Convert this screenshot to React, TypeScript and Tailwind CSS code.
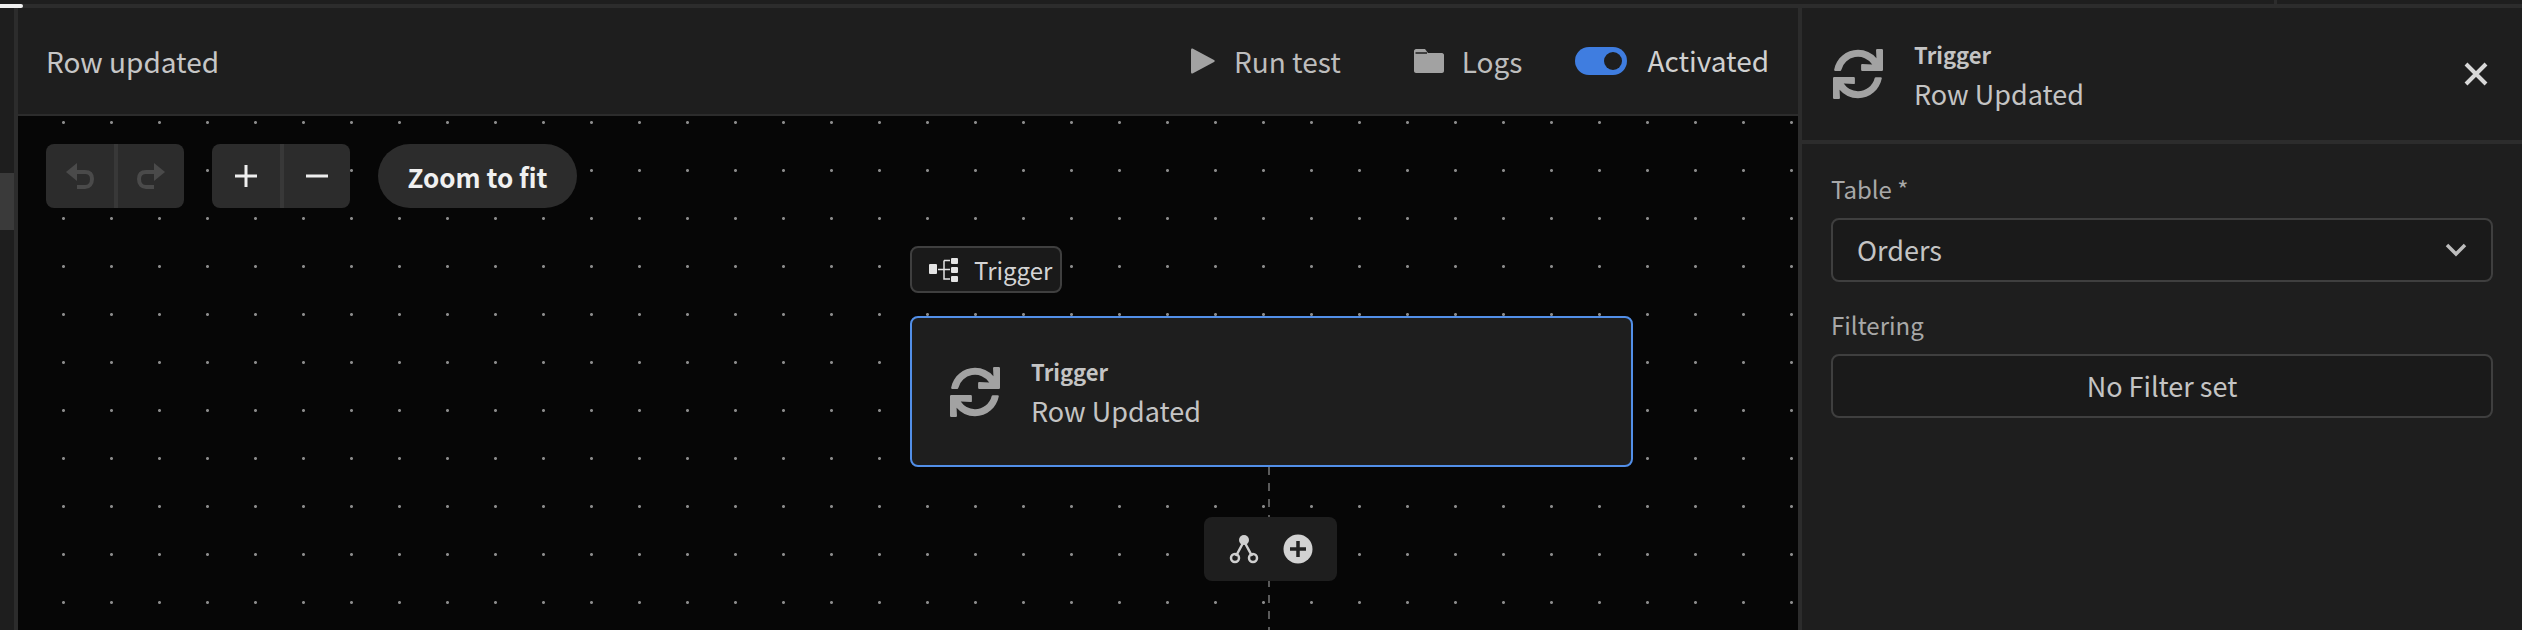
import { FaSync } from "react-icons/fa";

const font = "font-['Noto_Sans_CJK_SC','Noto_Sans',sans-serif]";

function Undo({ flip }: { flip?: boolean }) {
  return (
    <svg width="28" height="26" viewBox="0 0 28 26" className={flip ? "-scale-x-100" : ""}>
      <path d="M0 9 L11 0 V18 Z" fill="#4a4a4a" />
      <path d="M9 9 H19 C24 9 26 12 26 16 C26 21 23 24 19 24 H11" fill="none" stroke="#4a4a4a" strokeWidth="4" />
    </svg>
  );
}

function TriggerIcon() {
  return (
    <svg width="30" height="24" viewBox="0 0 30 24" fill="#e4e4e4">
      <rect x="0" y="6" width="8" height="10" rx="1" />
      <rect x="22" y="0" width="7" height="6" rx="1" />
      <rect x="22" y="9" width="7" height="6" rx="1" />
      <rect x="22" y="18" width="7" height="6" rx="1" />
      <path d="M9 11.5 H21 M15 2.5 H21 M15 2.5 V21 H21" fill="none" stroke="#e4e4e4" strokeWidth="1.5" />
    </svg>
  );
}

function BranchIcon() {
  return (
    <svg width="30" height="30" viewBox="0 0 30 30" fill="none" stroke="#cfcfcf">
      <circle cx="15" cy="6" r="5" fill="#cfcfcf" stroke="none" />
      <path d="M14 9 L7 22 M16 9 L23 22" strokeWidth="2.5" />
      <circle cx="6" cy="24" r="4" strokeWidth="2.5" />
      <circle cx="24" cy="24" r="4" strokeWidth="2.5" />
    </svg>
  );
}

function PlusCircle() {
  return (
    <svg width="30" height="30" viewBox="0 0 30 30">
      <circle cx="15" cy="15" r="14.5" fill="#d2d2d2" />
      <path d="M15 7 V23 M7 15 H23" stroke="#222222" strokeWidth="3.5" />
    </svg>
  );
}

function NodeTitle() {
  return (
    <div className="flex flex-col">
      <span className="text-[22px] leading-[30px] font-bold text-[#c4c4c4]">Trigger</span>
      <span className="mt-[9px] text-[27px] leading-[32px] text-[#c4c4c4]">Row Updated</span>
    </div>
  );
}

export default function App() {
  return (
    <div className={`relative flex h-[630px] w-[2522px] flex-col overflow-hidden bg-[#1e1e1e] ${font}`}>
      <div className="relative h-1 shrink-0">
        <div className="absolute left-[2274px] top-0 h-1 w-[3px] bg-[#2c2c2c]" />
      </div>
      <div className="h-1 shrink-0 bg-[#2c2c2c]">
        <div className="h-1 w-[23px] rounded-r-full bg-[#f0f0f0]" />
      </div>
      <div className="flex min-h-0 flex-1">
        <div className="w-[14px] shrink-0 pt-[165px]">
          <div className="h-[57px] bg-[#3a3a3a]" />
        </div>
        <div className="w-1 shrink-0 bg-[#2c2c2c]" />

        <main className="flex w-[1780px] shrink-0 flex-col">
          <header className="flex h-[106px] shrink-0 items-center border-[#1e1e1e] pl-[28px] pr-[29px]">
            <span className="text-[28px] text-[#c6c6c6]">Row updated</span>
            <div className="ml-auto flex items-center">
              <svg width="25" height="26" viewBox="0 0 25 26">
                <path d="M1 2 C1 0.5 2 0 3 0.8 L24 12 C25 12.6 25 13.4 24 14 L3 25.2 C2 26 1 25.5 1 24 Z" fill="#a2a2a2" />
              </svg>
              <span className="ml-[19px] text-[28px] text-[#bdbdbd]">Run test</span>
              <svg className="ml-[73px]" width="30" height="24" viewBox="0 0 30 24">
                <path d="M0 2 C0 1 1 0 2 0 H11 L14 4 H28 C29 4 30 5 30 6 V22 C30 23 29 24 28 24 H2 C1 24 0 23 0 22 Z" fill="#a2a2a2" />
                <path d="M1.5 4 H13" stroke="#1e1e1e" strokeWidth="1.5" />
              </svg>
              <span className="ml-[18px] text-[28px] text-[#bdbdbd]">Logs</span>
              <div className="ml-[53px] flex h-[28px] w-[52px] items-center justify-end rounded-full bg-[#3f7de0] pr-[5px]">
                <div className="h-[18px] w-[18px] rounded-full bg-[#1e1e1e]" />
              </div>
              <span className="ml-[20px] -translate-y-[1px] text-[28px] text-[#d0d0d0]">Activated</span>
            </div>
          </header>
          <div className="h-[2px] shrink-0 bg-[#2c2c2c]" />

          <div className="relative min-h-0 flex-1 bg-[#060606] bg-[radial-gradient(circle_at_1.5px_1.5px,#8a8a8a_1.2px,transparent_1.7px)] bg-size-[48px_48px] bg-position-[44px_5px]">
            <div className="absolute left-[28px] top-[28px] flex items-center gap-[28px]">
              <div className="flex h-[64px] w-[138px] rounded-lg bg-[#2c2c2c]">
                <div className="flex w-[68px] items-center justify-center"><Undo /></div>
                <div className="w-[4px] bg-[#383838]" />
                <div className="flex flex-1 items-center justify-center"><Undo flip /></div>
              </div>
              <div className="flex h-[64px] w-[138px] rounded-lg bg-[#2c2c2c]">
                <div className="flex w-[68px] items-center justify-center">
                  <svg width="24" height="24" viewBox="0 0 24 24"><path d="M12 1 V23 M1 12 H23" stroke="#eeeeee" strokeWidth="3" /></svg>
                </div>
                <div className="w-[4px] bg-[#383838]" />
                <div className="flex flex-1 items-center justify-center">
                  <svg width="24" height="24" viewBox="0 0 24 24"><path d="M1 12 H23" stroke="#eeeeee" strokeWidth="3" /></svg>
                </div>
              </div>
              <button className="h-[64px] w-[199px] rounded-full bg-[#2c2c2c] text-[26px] font-semibold text-[#f0f0f0]">Zoom to fit</button>
            </div>

            <div className="absolute left-[892px] top-[130px] flex h-[47px] w-[152px] items-center gap-[15px] rounded-lg border-2 border-[#3f3f3f] bg-[#1a1a1a] pl-[17px]">
              <TriggerIcon />
              <span className="text-[24px] text-[#d4d4d4]">Trigger</span>
            </div>

            <div className="absolute left-[892px] top-[200px] flex h-[151px] w-[723px] items-center gap-[31px] rounded-lg border-2 border-[#528fe8] bg-[#1e1e1e] pl-[38px]">
              <FaSync size={50} color="#a2a2a2" />
              <NodeTitle />
            </div>

            <div className="absolute left-[1250px] top-[351px] h-[163px] w-[2px] bg-[repeating-linear-gradient(to_bottom,#5a5a5a_0px,#5a5a5a_8px,transparent_8px,transparent_16px)]" />

            <div className="absolute left-[1186px] top-[401px] flex h-[64px] w-[133px] items-center justify-center gap-[24px] rounded-lg bg-[#1e1e1e]">
              <BranchIcon />
              <PlusCircle />
            </div>
          </div>
        </main>

        <div className="w-1 shrink-0 bg-[#2c2c2c]" />

        <aside className="flex min-w-0 flex-1 flex-col">
          <div className="flex h-[132px] shrink-0 items-center pl-[31px] pr-[34px]">
            <FaSync size={50} color="#a2a2a2" />
            <div className="ml-[31px]"><NodeTitle /></div>
            <svg className="ml-auto" width="24" height="24" viewBox="0 0 24 24">
              <path d="M2 2 L22 22 M22 2 L2 22" stroke="#d8d8d8" strokeWidth="4" />
            </svg>
          </div>
          <div className="h-1 shrink-0 bg-[#2c2c2c]" />
          <div className="flex flex-col px-[29px] pt-[30px]">
            <label className="text-[24px] leading-[30px] text-[#a8a8a8]">Table *</label>
            <div className="mt-[14px] flex h-[64px] items-center justify-between rounded-lg border-2 border-[#3f3f3f] bg-[#1a1a1a] pl-[24px] pr-[24px]">
              <span className="text-[27px] text-[#c4c4c4]">Orders</span>
              <svg width="22" height="14" viewBox="0 0 22 14" fill="none"><path d="M2 2 L11 11 L20 2" stroke="#bdbdbd" strokeWidth="3.5" /></svg>
            </div>
            <label className="mt-[28px] text-[24px] leading-[30px] text-[#a8a8a8]">Filtering</label>
            <div className="mt-[14px] flex h-[64px] items-center justify-center rounded-lg border-2 border-[#3f3f3f] bg-[#1a1a1a]">
              <span className="text-[27px] text-[#c4c4c4]">No Filter set</span>
            </div>
          </div>
        </aside>
      </div>
    </div>
  );
}
